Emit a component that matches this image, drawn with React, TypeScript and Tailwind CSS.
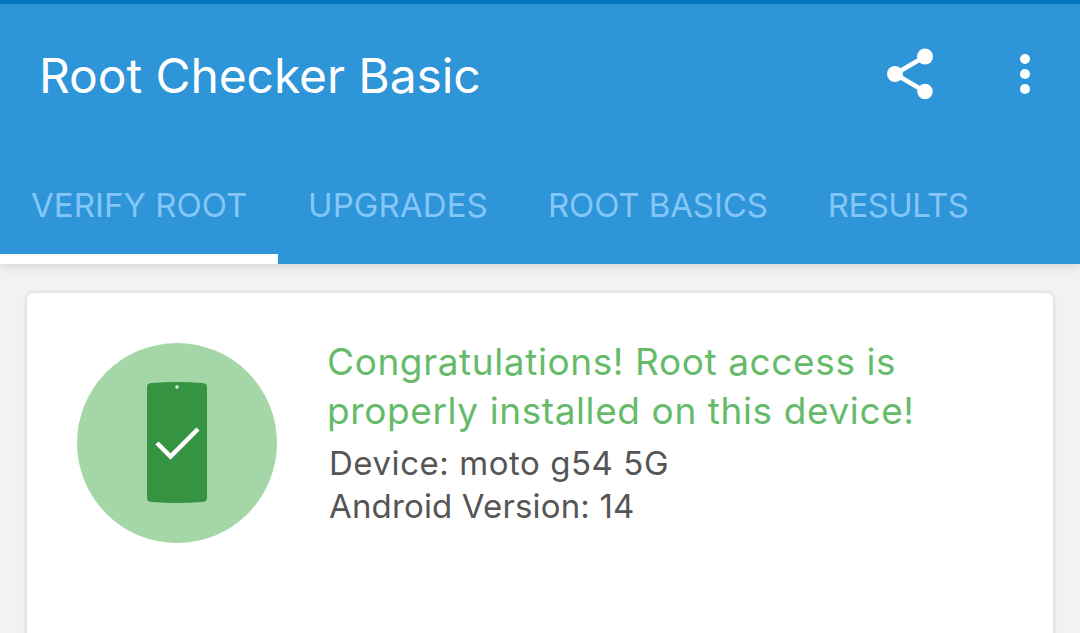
export default function App() {
  return (
    <div className="flex h-[633px] w-[1080px] flex-col overflow-hidden bg-[#f2f2f2] font-['Inter',sans-serif]">
      <header className="relative z-10 flex h-[264px] shrink-0 flex-col border-t-4 border-[#0277bd] bg-[#2d95d8] shadow-[0_2px_10px_rgba(0,0,0,0.13)]">
        <div className="flex h-[142px] shrink-0 items-start justify-between pt-[38px] pl-[39px] pr-[49px]">
          <h1 className="text-[48px] leading-[68px] font-normal tracking-[-0.1px] whitespace-nowrap text-white">Root Checker Basic</h1>
          <div className="flex items-center gap-[84px] pt-[6px]">
            <svg width="48" height="52" viewBox="0 0 48 52" className="block">
              <g fill="#fff">
                <circle cx="38" cy="8.500" r="8" />
                <circle cx="8" cy="26" r="8" />
                <circle cx="38" cy="43.500" r="7.800" />
              </g>
              <path d="M38 8.500 8 26 38 43.500" fill="none" stroke="#fff" strokeWidth="4.500" />
            </svg>
            <svg width="12" height="42" viewBox="0 0 12 42" className="block">
              <g fill="#fff">
                <circle cx="6" cy="6" r="5" />
                <circle cx="6" cy="21" r="5" />
                <circle cx="6" cy="36" r="5" />
              </g>
            </svg>
          </div>
        </div>
        <nav className="flex h-[118px] items-stretch text-[33px] font-normal text-[#85c6f9]">
          <div className="w-[278px] border-b-[10px] border-white pt-[35px] pl-[31px]">
            <span className="tracking-[0.05px] whitespace-nowrap">VERIFY ROOT</span>
          </div>
          <div className="pt-[35px] pl-[30px]">
            <span className="tracking-[0.1px] whitespace-nowrap">UPGRADES</span>
          </div>
          <div className="pt-[35px] pl-[60px]">
            <span className="tracking-[-0.1px] whitespace-nowrap">ROOT BASICS</span>
          </div>
          <div className="pt-[35px] pl-[60px]">
            <span className="tracking-[-0.6px] whitespace-nowrap">RESULTS</span>
          </div>
        </nav>
      </header>
      <main className="flex-1 px-[27px] pt-[29px]">
        <section className="flex h-[400px] items-start rounded-[6px] bg-white pt-[44px] pl-[50px] shadow-[0_0_5px_rgba(0,0,0,0.16)]">
          <svg width="200" height="200" viewBox="0 0 200 200" className="mt-[6px] block shrink-0">
            <circle cx="100" cy="100" r="100" fill="#a5d6a7" />
            <path d="M70 44Q70 40 75 40Q100 38 125 40Q130 40 130 44V155Q130 159 125 159Q100 161 75 159Q70 159 70 155Z" fill="#359342" />
            <circle cx="100" cy="44" r="1.800" fill="#dcefdc" />
            <path d="M80 100l13.500 13.500L121 86" fill="none" stroke="#fff" strokeWidth="4.500" />
          </svg>
          <div className="ml-[50px] flex flex-col">
            <p className="text-[37px] leading-[49px] font-normal tracking-[0.6px] whitespace-nowrap text-[#66bb6a]">
              Congratulations! Root access is
              <br />
              properly installed on this device!
            </p>
            <div className="mt-[7px] ml-[2px] text-[33px] leading-[43px] font-normal whitespace-nowrap text-[#555555]">
              <p className="tracking-[0.55px]">Device: moto g54 5G</p>
              <p className="tracking-[0.15px]">Android Version: 14</p>
            </div>
          </div>
        </section>
      </main>
    </div>
  );
}
